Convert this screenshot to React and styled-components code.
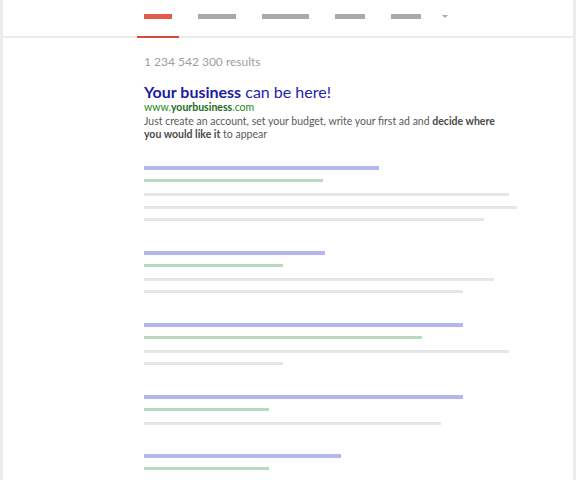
import React from "react";
import styled, { createGlobalStyle } from "styled-components";

const GlobalStyle = createGlobalStyle`
    html, body {
        margin: 0;
        padding: 0;
        background: #fff;
    }
    body {
        font-family: Lato, "Open Sans", sans-serif;
    }
`;

const Frame = styled.div`
    box-sizing: border-box;
    min-height: 480px;
    border-left: 3px solid #ebebeb;
    border-right: 3px solid #ebebeb;
    overflow: hidden;
`;

const Header = styled.div`
    display: flex;
    gap: 12px;
    height: 36px;
    padding-left: 134px;
    border-bottom: 2px solid #ebebeb;
`;

const Tab = styled.div`
    box-sizing: border-box;
    height: 38px;
    padding: 14px 7px 0;
    margin-bottom: -2px;
    border-bottom: 2px solid ${p => (p.$active ? "#d9493a" : "transparent")};
`;

const TabBar = styled.div`
    width: ${p => p.$w}px;
    height: 5px;
    background: ${p => (p.$active ? "#e25b4a" : "#a9a9a9")};
`;

const MoreArrow = styled.div`
    margin: 15px 0 0 2px;
    width: 0;
    height: 0;
    border-left: 3px solid transparent;
    border-right: 3px solid transparent;
    border-top: 3px solid #a9a9a9;
`;

const Content = styled.div`
    padding: 17px 0 0 141px;
`;

const Count = styled.div`
    font-size: 12px;
    line-height: 14px;
    color: #9e9e9e;
`;

const Ad = styled.div`
    margin-top: 15px;
`;

const AdTitle = styled.div`
    font-size: 16px;
    line-height: 16px;
    color: #2323b0;
    b {
        color: #1c1ca4;
        font-weight: 700;
    }
`;

const AdUrl = styled.div`
    font-size: 10.5px;
    line-height: 13px;
    color: #1d8a1d;
    margin-top: 1px;
    b {
        color: #1b6b1b;
        font-weight: 700;
    }
`;

const AdText = styled.div`
    font-size: 10.5px;
    line-height: 13px;
    color: #5a5a5a;
    max-width: 358px;
    margin-top: 1px;
    b {
        color: #4a4a4a;
        font-weight: 700;
    }
`;

const Results = styled.div`
    margin-top: 25px;
    display: flex;
    flex-direction: column;
    gap: 29.5px;
`;

const Result = styled.div`
    display: flex;
    flex-direction: column;
`;

const Line = styled.div`
    width: ${p => p.$w}px;
    height: ${p => (p.$kind === "title" ? 4 : 3)}px;
    background: ${p =>
        p.$kind === "title" ? "#b3b6ef" : p.$kind === "url" ? "#b6dabb" : "#e6e6e6"};
    margin-bottom: ${p => (p.$kind === "title" ? 9 : p.$kind === "url" ? 11 : 9.5)}px;
    &:last-child {
        margin-bottom: 0;
    }
`;

const tabs = [28, 38, 47, 30, 30];

const results = [
    { title: 235, url: 179, lines: [365, 373, 340] },
    { title: 181, url: 139, lines: [350, 319] },
    { title: 319, url: 278, lines: [365, 139] },
    { title: 319, url: 125, lines: [297] },
    { title: 197, url: 125, lines: [] },
];

export default function App() {
    return <Frame>
        <GlobalStyle />
        <Header>
            {tabs.map((w, i) => <Tab key={`tab-${i}`} $active={i === 0}>
                <TabBar $w={w} $active={i === 0} />
            </Tab>)}
            <MoreArrow />
        </Header>
        <Content>
            <Count>1 234 542 300 results</Count>
            <Ad>
                <AdTitle><b>Your business</b> can be here!</AdTitle>
                <AdUrl>www.<b>yourbusiness</b>.com</AdUrl>
                <AdText>
                    Just create an account, set your budget, write your first ad and <b>decide where you would like it</b> to appear
                </AdText>
            </Ad>
            <Results>
                {results.map((r, i) => <Result key={`result-${i}`}>
                    <Line $kind="title" $w={r.title} />
                    <Line $kind="url" $w={r.url} />
                    {r.lines.map((w, j) => <Line key={`line-${i}-${j}`} $w={w} />)}
                </Result>)}
            </Results>
        </Content>
    </Frame>;
}
